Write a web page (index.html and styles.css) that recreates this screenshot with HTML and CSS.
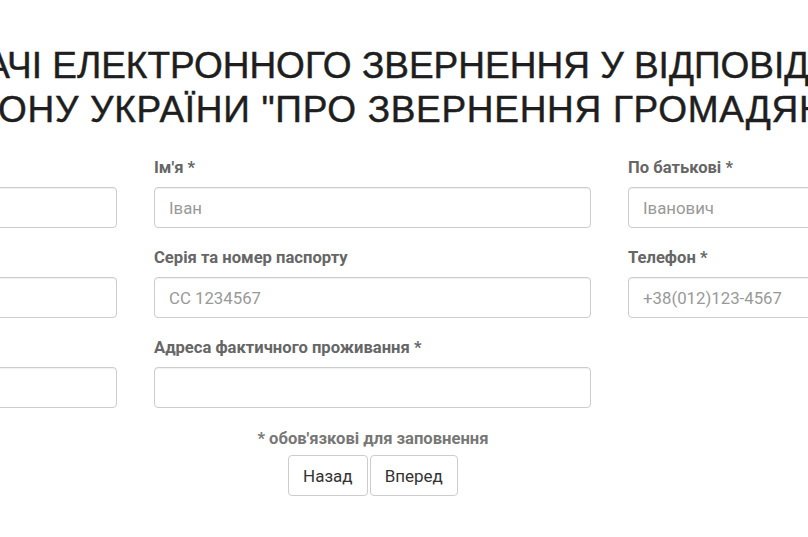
FILE: index.html
```html
<!DOCTYPE html>
<html lang="uk">
<head>
<meta charset="utf-8">
<title>Форма подачі електронного звернення</title>
<link rel="stylesheet" href="styles.css">
</head>
<body>
<div class="page">
  <h1 class="title"><span class="line">ФОРМА ПОДАЧІ ЕЛЕКТРОННОГО ЗВЕРНЕННЯ У ВІДПОВІДНОСТІ ДО</span><span class="line line-second">ЗАКОНУ УКРАЇНИ "ПРО ЗВЕРНЕННЯ ГРОМАДЯН"</span></h1>
  <form class="form">
    <div class="grid">
      <div class="field">
        <label class="label">Прізвище *</label>
        <input class="input" type="text" placeholder="">
      </div>
      <div class="field">
        <label class="label">Ім'я *</label>
        <input class="input" type="text" placeholder="Іван">
      </div>
      <div class="field">
        <label class="label">По батькові *</label>
        <input class="input" type="text" placeholder="Іванович">
      </div>
      <div class="field">
        <label class="label">Email *</label>
        <input class="input" type="text" placeholder="">
      </div>
      <div class="field">
        <label class="label">Серія та номер паспорту</label>
        <input class="input" type="text" placeholder="CC 1234567">
      </div>
      <div class="field">
        <label class="label">Телефон *</label>
        <input class="input" type="text" placeholder="+38(012)123-4567">
      </div>
      <div class="field">
        <label class="label">Місто *</label>
        <input class="input" type="text" placeholder="">
      </div>
      <div class="field">
        <label class="label">Адреса фактичного проживання *</label>
        <input class="input" type="text" placeholder="">
      </div>
      <div class="field"></div>
    </div>
    <p class="note">* обов'язкові для заповнення</p>
    <div class="actions">
      <button type="button" class="btn">Назад</button>
      <button type="button" class="btn">Вперед</button>
    </div>
  </form>
</div>
</body>
</html>
```
FILE: styles.css
```css
html, body {
  margin: 0;
  padding: 0;
  background: #fff;
  overflow: hidden;
}
body {
  font-family: Roboto, "Noto Sans", Arial, sans-serif;
  color: #333;
}
.page {
  width: 1386px;
  margin-left: -320px;
  padding-top: 44px;
}
.title {
  margin: 0;
  font-family: "Liberation Sans", Arial, sans-serif;
  font-weight: 400;
  font-size: 37px;
  line-height: 44px;
  color: #1e1e1e;
  -webkit-text-stroke: 0.45px #1e1e1e;
  text-align: center;
  white-space: nowrap;
}
.line {
  display: block;
}
.line-second {
  padding-left: 22px;
  letter-spacing: 0.7px;
}
.form {
  margin-top: 26px;
}
.grid {
  display: grid;
  grid-template-columns: repeat(3, 437px);
  column-gap: 37px;
  row-gap: 20px;
}
.field {
  display: flex;
  flex-direction: column;
  gap: 9px;
}
.label {
  font-size: 16.6px;
  font-weight: 700;
  color: #666;
  line-height: 20px;
}
.input {
  box-sizing: border-box;
  height: 41px;
  border: 1px solid #ccc;
  border-radius: 4px;
  padding: 0 14px;
  font-family: inherit;
  font-size: 16.8px;
  color: #555;
  box-shadow: inset 0 1px 1px rgba(0,0,0,0.06);
}
.input::placeholder {
  color: #999;
}
.note {
  margin: 21px 0 0;
  text-align: center;
  font-size: 16.6px;
  font-weight: 700;
  color: #777;
  line-height: 20px;
}
.actions {
  display: flex;
  justify-content: center;
  gap: 2px;
  margin-top: 6px;
}
.btn {
  height: 41px;
  padding: 0 14px;
  border: 1px solid #ccc;
  border-radius: 4px;
  background: #fff;
  font-family: inherit;
  font-size: 17px;
  color: #333;
}
```
